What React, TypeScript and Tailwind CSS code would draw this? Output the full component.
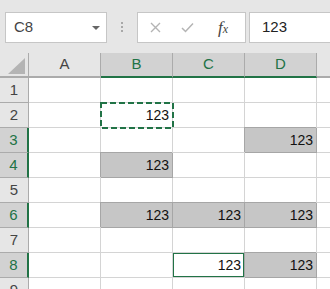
import React from 'react';

const GREEN = '#217346';

type CellKind = 'empty' | 'fill' | 'active' | 'copy';

// which cells of the sheet hold "123" and how they are marked
const sheet: Record<number, Record<string, CellKind>> = {
  2: { B: 'copy' },
  3: { D: 'fill' },
  4: { B: 'fill' },
  6: { B: 'fill', C: 'fill', D: 'fill' },
  8: { C: 'active', D: 'fill' },
};

const selectedRows = [3, 4, 6, 8];
const cols = ['A', 'B', 'C', 'D'];
const selectedCols = ['B', 'C', 'D'];

const Toolbar = () => (
  <div className="flex h-[53px] items-start bg-[#e6e6e6] pt-[12px] pl-[5px]">
    <div className="flex h-[31px] w-[102px] items-center justify-between border border-[#c6c6c6] bg-white pr-[6px] pl-[8px]">
      <span className="text-[15px] text-[#444]">C8</span>
      <svg width="8" height="4" viewBox="0 0 8 4">
        <path d="M0 0 L8 0 L4 4 Z" fill="#666" />
      </svg>
    </div>
    <div className="mt-[10px] ml-[14px] flex flex-col gap-[2px]">
      <span className="h-[2px] w-[2px] bg-[#a8a8a8]" />
      <span className="h-[2px] w-[2px] bg-[#a8a8a8]" />
      <span className="h-[2px] w-[2px] bg-[#a8a8a8]" />
    </div>
    <div className="ml-[14px] flex h-[31px] w-[109px] items-center border border-[#c6c6c6] bg-white">
      <svg className="ml-[12px]" width="11" height="11" viewBox="0 0 11 11">
        <path d="M1 1 L10 10 M10 1 L1 10" stroke="#b4b4b4" strokeWidth="1.4" />
      </svg>
      <svg className="ml-[20px]" width="13" height="11" viewBox="0 0 13 11">
        <path d="M1 6 L4.5 9.5 L12 1.5" stroke="#b4b4b4" strokeWidth="1.5" fill="none" />
      </svg>
      <span className="ml-[24px] font-['Liberation_Serif',serif] text-[17px] leading-none text-[#444] italic">
        f<span className="text-[12px]">x</span>
      </span>
    </div>
    <div className="ml-[3px] flex h-[31px] flex-1 items-center border border-r-0 border-[#c6c6c6] bg-white pl-[12px]">
      <span className="text-[15px] text-[#222]">123</span>
    </div>
  </div>
);

const HeaderRow = () => (
  <div className="flex h-[25px]">
    <div className="relative w-[29px] border-r border-b-2 border-[#ababab] bg-[#e6e6e6]">
      <svg className="absolute top-[5px] left-[8px]" width="17" height="16" viewBox="0 0 17 16">
        <path d="M17 0 L17 16 L0 16 Z" fill="#b4b4b4" />
      </svg>
    </div>
    {cols.map(c => {
      const sel = selectedCols.includes(c);
      return (
        <div
          key={c}
          className={
            sel
              ? 'flex w-[72px] items-center justify-center border-r border-b-2 border-r-[#ababab] border-b-[#217346] bg-[#d2d2d2] text-[15px] text-[#217346]'
              : 'flex w-[72px] items-center justify-center border-r border-b-2 border-r-[#ababab] border-b-[#ababab] bg-[#e6e6e6] text-[15px] text-[#444]'
          }
        >
          {c}
        </div>
      );
    })}
    <div className="flex-1 border-b-2 border-[#ababab] bg-[#e6e6e6]" />
  </div>
);

const Cell = ({ kind }: { kind: CellKind }) => {
  if (kind === 'fill') {
    return (
      <div className="flex w-[72px] items-center justify-end border-r border-b border-[#a6a6a6] bg-[#c6c6c6] pr-[3px] text-[14px] text-[#111] shadow-[-1px_-1px_0_#a6a6a6]">
        123
      </div>
    );
  }
  if (kind === 'active') {
    return (
      <div className="w-[72px] border-r border-b border-[#d4d4d4] bg-white p-0">
        <div className="flex h-full w-[71px] items-center justify-end border border-[#217346] pr-[2px] text-[14px] text-[#111]">
          123
        </div>
      </div>
    );
  }
  if (kind === 'copy') {
    return (
      <div className="relative flex w-[72px] items-center justify-end border-r border-b border-[#d4d4d4] bg-white pr-[3px] text-[14px] text-[#111]">
        123
        <svg className="absolute -top-[1px] -left-[1px]" width="74" height="27" viewBox="0 0 74 27">
          <rect x="1" y="1" width="72" height="25" fill="none" stroke={GREEN} strokeWidth="2" strokeDasharray="6 3" />
        </svg>
      </div>
    );
  }
  return <div className="w-[72px] border-r border-b border-[#d4d4d4] bg-white" />;
};

const Row = ({ n }: { n: number }) => {
  const sel = selectedRows.includes(n);
  const data = sheet[n] || {};
  return (
    <div className="flex h-[25px] shrink-0">
      <div
        className={
          sel
            ? 'flex w-[29px] items-center justify-center border-r-2 border-b border-r-[#217346] border-b-[#ababab] bg-[#d2d2d2] text-[15px] text-[#217346]'
            : 'flex w-[29px] items-center justify-center border-r border-b border-[#ababab] bg-[#e6e6e6] text-[15px] text-[#444]'
        }
      >
        {n}
      </div>
      {cols.map(c => (
        <Cell key={c} kind={data[c] || 'empty'} />
      ))}
      <div className="flex-1 border-b border-[#d4d4d4] bg-white" />
    </div>
  );
};

export default function App() {
  return (
    <div className="h-[289px] w-[330px] overflow-hidden bg-white font-['Liberation_Sans',sans-serif]">
      <Toolbar />
      <HeaderRow />
      {[1, 2, 3, 4, 5, 6, 7, 8, 9].map(n => (
        <Row key={n} n={n} />
      ))}
    </div>
  );
}
